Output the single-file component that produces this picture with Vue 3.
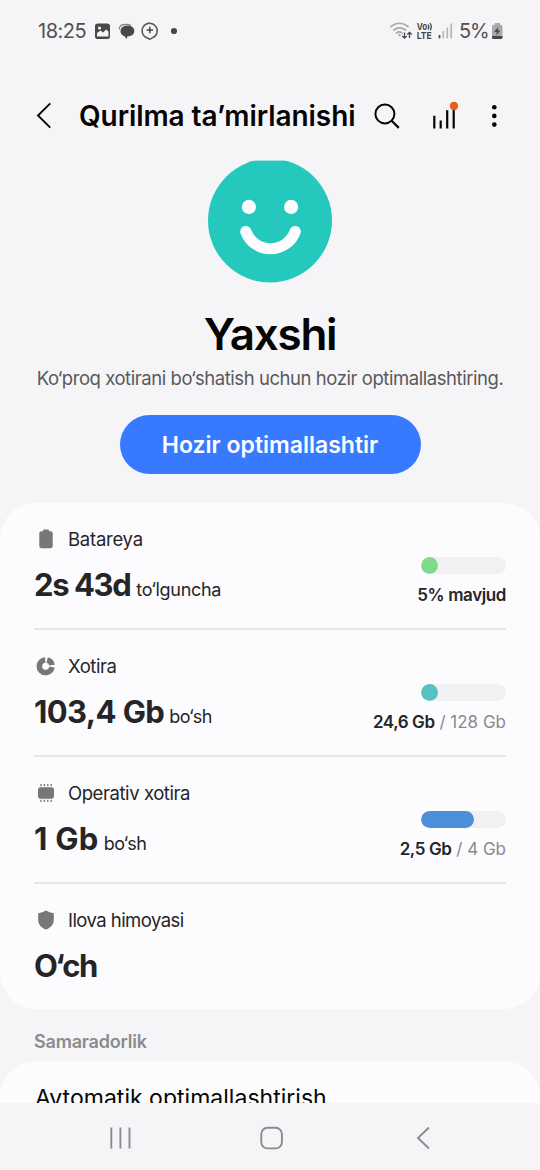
<script setup>
const rows = [
  { id: 'battery', label: 'Batareya', value: '2s 43d', unit: 'to‘lguncha', fill: 20, color: '#7edb8b', strong: '5% mavjud', total: '' },
  { id: 'storage', label: 'Xotira', value: '103,4 Gb', unit: 'bo‘sh', fill: 20, color: '#55c1c3', strong: '24,6 Gb', total: ' / 128 Gb' },
  { id: 'memory', label: 'Operativ xotira', value: '1 Gb', unit: 'bo‘sh', fill: 62, color: '#4c8fd6', strong: '2,5 Gb', total: ' / 4 Gb' },
  { id: 'shield', label: 'Ilova himoyasi', value: 'O‘ch', unit: '' },
]
</script>

<template>
  <div class="screen">
    <div class="status">
      <span class="clock">18:25</span>
      <svg class="st-left" width="90" height="24" viewBox="90 19 90 24">
        <rect x="95" y="23.500" width="15" height="15.500" rx="2.800" fill="#48484b" />
        <path d="M97 36.500 V33 L100.500 30.500 L103 32.500 L106 29.500 L108.500 31.500 V36.500 Z" fill="#f5f5f8" />
        <circle cx="99.500" cy="28" r="1.600" fill="#f5f5f8" />
        <path d="M119.300 29.500 C119 26 121.500 24.500 125 24.500 C128 24.500 130 24.800 131 25.600" fill="none" stroke="#858588" stroke-width="1.300" />
        <path d="M120.500 31 C120.500 27.500 123.500 25.800 127.500 25.800 C131.500 25.800 134.300 27.500 134.300 31 C134.300 34.500 131.500 36.200 127.500 36.300 L126.500 39 L124.300 36 C122 35.500 120.500 33.800 120.500 31 Z" fill="#48484b" />
        <path d="M148 38.200 A7.600 7.600 0 1 1 152.300 37.900 L149.600 39.300 Z" fill="none" stroke="#58585b" stroke-width="1.400" stroke-linejoin="round" />
        <path d="M149.800 26.700 V33.300 M146.500 30 H153.100" stroke="#48484b" stroke-width="1.500" />
        <circle cx="174" cy="31" r="3.100" fill="#48484b" />
      </svg>
      <svg class="st-right" width="66" height="24" viewBox="389 19 66 24">
        <g fill="none" stroke="#a9a9ac" stroke-width="1.700" stroke-linecap="round">
          <path d="M391 26.500 Q399.500 20 408 26.500" />
          <path d="M393.800 30 Q399.500 25.700 405.500 30" />
          <path d="M396.500 33 Q399.500 30.800 402 33" />
        </g>
        <circle cx="399.500" cy="35" r="1.200" fill="#a9a9ac" />
        <path d="M404.500 32.500 V38 M402.300 36 L404.500 38.200 L406.700 36 M409.500 38 V32.500 M407.300 34.500 L409.500 32.300 L411.700 34.500" fill="none" stroke="#48484b" stroke-width="1.300" />
        <text x="416.800" y="30" class="lte" textLength="10.500" lengthAdjust="spacingAndGlyphs">Vo</text>
        <path d="M428 24.500 Q429.600 26.800 428 29.300 M430 23.200 Q432.600 26.800 430 30.500" fill="none" stroke="#48484b" stroke-width="1.300" />
        <text x="416.800" y="38.600" class="lte" textLength="15" lengthAdjust="spacingAndGlyphs">LTE</text>
        <path d="M439.500 35 V38.300" stroke="#48484b" stroke-width="1.800" />
        <path d="M443.300 31 V38.300 M447.300 27.500 V38.300 M451.200 23.500 V38.300" stroke="#b5b5b8" stroke-width="1.700" />
      </svg>
      <span class="pct">5%</span>
      <svg class="st-batt" width="12" height="18" viewBox="491 22 12 18">
        <path d="M494.800 23 H500 V24.800 H501 Q502.500 24.800 502.500 26.300 V36 H492 V26.300 Q492 24.800 493.500 24.800 H494.800 Z" fill="#a9a9ac" />
        <path d="M492 36 H502.500 V37.500 Q502.500 39 501 39 H493.500 Q492 39 492 37.500 Z" fill="#48484b" />
        <path d="M498.200 27 L494.200 32 H496.800 L496.300 35.500 L500.300 30.600 H497.800 Z" fill="#48484b" />
      </svg>
    </div>

    <header class="bar">
      <svg class="back" width="20" height="30" viewBox="34 101 20 30">
        <path d="M50.300 103.300 L38 115.500 L50.300 127.700" fill="none" stroke="#050505" stroke-width="1.900" />
      </svg>
      <h1>Qurilma taʼmirlanishi</h1>
      <svg class="tools" width="130" height="34" viewBox="370 98 130 34">
        <circle cx="384.900" cy="112.900" r="9.500" fill="none" stroke="#050505" stroke-width="2" />
        <path d="M391.600 119.700 L398.800 126.900" stroke="#050505" stroke-width="2.200" />
        <path d="M434.300 114.700 V127.500 M440.700 119.500 V127.500 M447.200 109.300 V127.500 M453.700 106.500 V127.500" stroke="#050505" stroke-width="2.200" />
        <circle cx="454" cy="105" r="4.200" fill="#ee5b16" />
        <g fill="#050505"><circle cx="494.300" cy="106.200" r="2.300" /><circle cx="494.300" cy="114.900" r="2.300" /><circle cx="494.300" cy="123.600" r="2.300" /></g>
      </svg>
    </header>

    <section class="hero">
      <svg class="face" width="126" height="123" viewBox="207 160 126 123">
        <circle cx="270" cy="220.500" r="62" fill="#24c8bc" />
        <rect x="207" y="160" width="126" height="0.600" fill="#f5f5f8" />
        <circle cx="248.900" cy="206.900" r="7.100" fill="#fdfdff" />
        <circle cx="291.100" cy="206.900" r="7.100" fill="#fdfdff" />
        <path d="M245.800 231.500 A26.300 26.300 0 0 0 295.200 231.500" fill="none" stroke="#fdfdff" stroke-width="11.200" stroke-linecap="round" />
      </svg>
      <h2>Yaxshi</h2>
      <p>Ko‘proq xotirani bo‘shatish uchun hozir optimallashtiring.</p>
      <button>Hozir optimallashtir</button>
    </section>

    <section class="card">
      <div v-for="row in rows" :key="row.id" class="row" :class="row.id">
        <div class="main">
          <div class="label">
            <svg width="20" height="22" viewBox="0 0 20 22" fill="#77777a">
              <path v-if="row.id === 'battery'" d="M7 2.500 Q7 1.500 8 1.500 H12 Q13 1.500 13 2.500 V3.200 H14.500 Q16.700 3.200 16.700 5.200 V18 Q16.700 20.300 14.500 20.300 H5.500 Q3.300 20.300 3.300 18 V5.200 Q3.300 3.200 5.500 3.200 H7 Z" />
              <template v-else-if="row.id === 'storage'">
                <path d="M9.300 5 A6.300 6.300 0 1 0 15.900 12.100" fill="none" stroke="#77777a" stroke-width="5.600" />
                <path d="M11.200 5 A6.300 6.300 0 0 1 16 10.200" fill="none" stroke="#77777a" stroke-width="5.600" />
              </template>
              <template v-else-if="row.id === 'memory'">
                <rect x="2" y="5.300" width="16" height="11.400" rx="2.600" />
                <path d="M5 2 V4.200 M8.400 2 V4.200 M11.800 2 V4.200 M15.200 2 V4.200 M5 17.800 V20 M8.400 17.800 V20 M11.800 17.800 V20 M15.200 17.800 V20" stroke="#77777a" stroke-width="1.300" />
              </template>
              <path v-else d="M10 1.600 Q13.500 4 17.800 4.200 V11 C17.800 15.500 14.500 19 10 20.600 C5.500 19 2.200 15.500 2.200 11 V4.200 Q6.500 4 10 1.600 Z" />
            </svg>
            <span>{{ row.label }}</span>
          </div>
          <div class="value"><b>{{ row.value }}</b><span v-if="row.unit">{{ row.unit }}</span></div>
        </div>
        <div v-if="row.color" class="meter">
          <div class="track"><div class="fill" :style="{ width: row.fill + '%', background: row.color }"></div></div>
          <div class="amount"><b>{{ row.strong }}</b>{{ row.total }}</div>
        </div>
      </div>
    </section>

    <div class="section-title">Samaradorlik</div>
    <section class="next">Avtomatik optimallashtirish</section>

    <nav class="nav">
      <svg width="540" height="67" viewBox="0 1103 540 67" fill="none" stroke="#8b8b8e" stroke-width="1.900">
        <path d="M111.300 1127.500 V1148.500 M120.400 1127.500 V1148.500 M129.500 1127.500 V1148.500" />
        <rect x="261.300" y="1127.800" width="20.600" height="20.600" rx="6.200" />
        <path d="M429 1127.500 L418 1138 L429 1148.500" />
      </svg>
    </nav>
  </div>
</template>

<style>
body { background: #f5f5f8; overflow: hidden; }
</style>

<style scoped>
.screen { width: 540px; height: 1170px; display: flex; flex-direction: column; overflow: hidden; background: #f5f5f8; font-family: Inter, "Noto Sans", sans-serif; color: #252528; white-space: nowrap; }
.status { height: 62px; flex: none; display: flex; align-items: center; padding-left: 38px; box-sizing: border-box; color: #505053; font-size: 20px; line-height: 24px; }
.clock { width: 52px; letter-spacing: -0.500px; }
.st-right { margin-left: 209px; }
.pct { margin-left: 4px; width: 32px; letter-spacing: -1.200px; }
.lte { font-size: 9.500px; font-weight: 700; fill: #48484b; }
.bar { height: 98px; flex: none; display: flex; align-items: center; padding: 9px 0 0 34px; box-sizing: border-box; color: #050505; }
h1 { margin: 0 0 0 25px; width: 291px; font-size: 28px; line-height: 34px; font-weight: 600; letter-spacing: -0.070px; }
.hero { height: 343px; flex: none; display: flex; flex-direction: column; align-items: center; }
.face { flex: none; }
h2 { margin: 24px 0 0; font-size: 44px; line-height: 54px; font-weight: 600; letter-spacing: -1.300px; color: #050505; }
p { margin: 5px 0 0; font-size: 18.500px; line-height: 24px; letter-spacing: -0.440px; color: #59595c; }
button { margin: 24.500px 0 0; width: 301px; height: 59px; flex: none; border: 0; padding: 1px 0 0; border-radius: 30px; background: #387aff; color: #fbfdff; font-family: inherit; font-size: 23px; font-weight: 600; letter-spacing: 0; }
.card { height: 506px; flex: none; box-sizing: border-box; padding: 0 34px; border-radius: 36px; background: #fcfcfe; }
.row { height: 127px; box-sizing: border-box; display: flex; justify-content: space-between; border-bottom: 2px solid #e6e6e8; }
.row:last-child { border: 0; }
.main { padding-top: 24px; }
.label { display: flex; align-items: center; height: 24px; padding-left: 2px; gap: 12px; font-size: 18.500px; line-height: 24px; letter-spacing: -0.250px; }
.label svg { margin-top: -1px; }
.value { display: flex; align-items: baseline; margin-top: 14px; line-height: 40px; font-size: 18px; letter-spacing: -0.300px; }
.value b { font-size: 31px; font-weight: 700; letter-spacing: -0.600px; margin-right: 6px; }
.battery .value b { letter-spacing: -1.400px; }
.memory .value b { letter-spacing: 0.300px; margin-right: 5px; }
.shield .value b { letter-spacing: -1.500px; }
.storage .value { letter-spacing: -0.500px; }
.storage .value b { margin-right: 5px; }
.memory .value { letter-spacing: -0.500px; }
.storage .label, .memory .label { letter-spacing: -0.430px; }
.shield .label { letter-spacing: -0.550px; }
.meter { display: flex; flex-direction: column; align-items: flex-end; padding-top: 54px; }
.track { width: 85px; height: 17px; border-radius: 9px; background: #f1f1f3; overflow: hidden; }
.fill { height: 17px; border-radius: 9px; }
.amount { margin-top: 9px; font-size: 17px; line-height: 24px; color: #8a8a8d; white-space: pre; letter-spacing: 0; }
.amount b { font-weight: 600; color: #252528; letter-spacing: -0.400px; }
.section-title { flex: none; height: 52px; box-sizing: border-box; padding: 21px 34px 0; font-size: 18px; line-height: 24px; font-weight: 600; color: #8b8b8e; letter-spacing: -0.200px; }
.next { flex: none; height: 42px; box-sizing: border-box; padding: 20px 35px 0; overflow: hidden; border-radius: 36px 36px 0 0; background: #fcfcfe; color: #050505; font-size: 23px; line-height: 34px; letter-spacing: 0.020px; }
.nav { height: 67px; flex: none; }
.nav svg { display: block; }
</style>
